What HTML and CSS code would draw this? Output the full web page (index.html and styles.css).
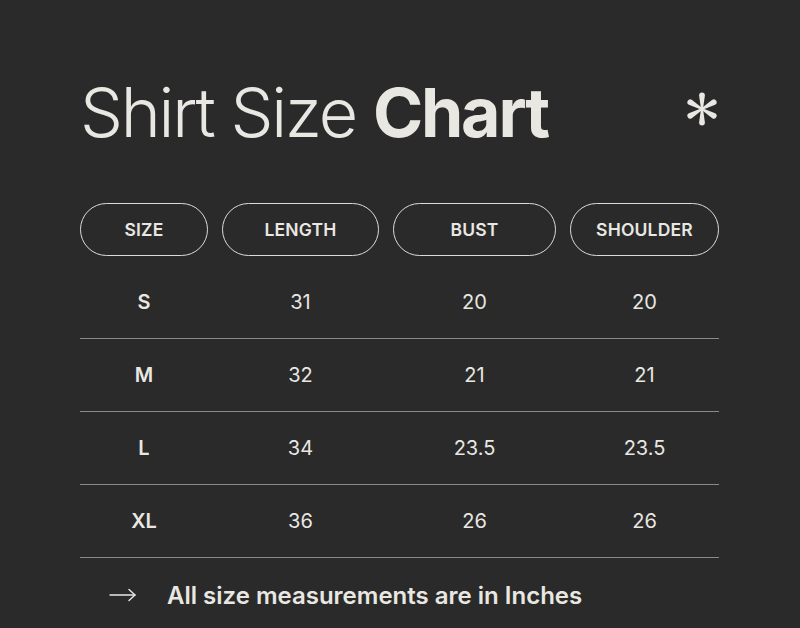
FILE: index.html
```html
<!DOCTYPE html>
<html lang="en">
<head>
<meta charset="utf-8">
<title>Shirt Size Chart</title>
<link rel="stylesheet" href="styles.css">
</head>
<body>
<main class="page">
  <header class="title-row">
    <h1 class="title"><span class="light">Shirt Size</span> <strong>Chart</strong></h1>
    <svg class="asterisk" width="38" height="36" viewBox="-19 -18 38 36" aria-hidden="true">
      <defs>
        <path id="arm" d="M -1 0 L -2.9 -13.5 A 2.9 2.9 0 0 1 2.9 -13.5 L 1 0 Z"/>
      </defs>
      <g fill="#e9e7e2">
        <use href="#arm"/>
        <use href="#arm" transform="rotate(60)"/>
        <use href="#arm" transform="rotate(120)"/>
        <use href="#arm" transform="rotate(180)"/>
        <use href="#arm" transform="rotate(240)"/>
        <use href="#arm" transform="rotate(300)"/>
        <circle r="1.8"/>
      </g>
    </svg>
  </header>

  <section class="chart">
    <div class="row head">
      <div class="pill">SIZE</div>
      <div class="pill">LENGTH</div>
      <div class="pill">BUST</div>
      <div class="pill">SHOULDER</div>
    </div>
    <div class="row data">
      <div class="label">S</div><div>31</div><div>20</div><div>20</div>
    </div>
    <div class="row data">
      <div class="label">M</div><div>32</div><div>21</div><div>21</div>
    </div>
    <div class="row data">
      <div class="label">L</div><div>34</div><div>23.5</div><div>23.5</div>
    </div>
    <div class="row data">
      <div class="label">XL</div><div>36</div><div>26</div><div>26</div>
    </div>
  </section>

  <p class="note">
    <svg class="arrow" width="28" height="14" viewBox="0 0 28 14" aria-hidden="true">
      <g fill="none" stroke="#e9e7e2" stroke-width="1.4" stroke-linecap="round" stroke-linejoin="round">
        <line x1="1" y1="7" x2="26" y2="7"/>
        <polyline points="20,1.5 26,7 20,12.5"/>
      </g>
    </svg>
    <span>All size measurements are in Inches</span>
  </p>
</main>
</body>
</html>
```
FILE: styles.css
```css
html, body {
  margin: 0;
  padding: 0;
  background: #2a2a2a;
}

body {
  font-family: Inter, "Noto Sans", "Liberation Sans", sans-serif;
  color: #e9e7e2;
}

.page {
  width: 639px;
  padding: 74px 0 0 80px;
}

.title-row {
  display: flex;
  justify-content: space-between;
  align-items: center;
  height: 76px;
}

.title {
  margin: 0;
  font-size: 68px;
  line-height: 76px;
  letter-spacing: -2.2px;
  font-weight: 300;
}

.title strong {
  font-weight: 700;
}

.asterisk {
  margin-right: -2px;
  margin-bottom: 7px;
}

.chart {
  margin-top: 53px;
}

.row {
  display: grid;
  grid-template-columns: 128px 157px 163px 149px;
  column-gap: 14px;
  text-align: center;
}

.head {
  margin-bottom: 10px;
}

.pill {
  height: 53px;
  box-sizing: border-box;
  border: 1.5px solid #dddbd6;
  border-radius: 27px;
  display: flex;
  align-items: center;
  justify-content: center;
  font-size: 17.5px;
  font-weight: 600;
  letter-spacing: 0.2px;
}

.data {
  height: 72px;
  align-items: center;
  border-bottom: 1px solid #8a8986;
  font-size: 20px;
  font-weight: 400;
}

.data .label {
  font-weight: 600;
}

.note {
  margin: 23px 0 0;
  display: flex;
  align-items: center;
  height: 28px;
  font-size: 24px;
  font-weight: 600;
}

.arrow {
  margin-left: 29px;
  margin-right: 30px;
}
```
